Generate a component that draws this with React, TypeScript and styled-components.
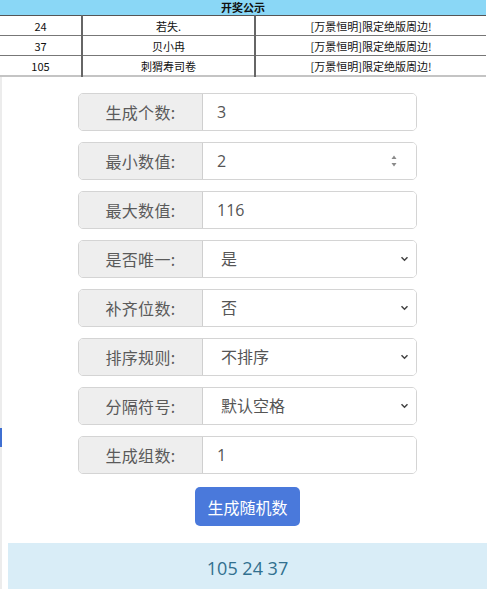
import React from "react";
import styled, { createGlobalStyle } from "styled-components";

const Global = createGlobalStyle`
  html, body { margin: 0; padding: 0; background: #fff; }
  body { font-family: "Noto Sans CJK SC", "Open Sans", sans-serif; }
`;

const Page = styled.div`
  position: relative;
  width: 487px;
  min-height: 589px;
  overflow: hidden;
`;

const Table = styled.table`
  width: 486px;
  border-collapse: collapse;
  table-layout: fixed;
  font-family: "Noto Sans CJK SC", sans-serif;
  font-size: 11px;
  color: #111;
  border-bottom: 2px solid #c4c4c4;
`;

const Col = styled.col<{ $w?: number }>`
  width: ${(p) => (p.$w ? `${p.$w}px` : "auto")};
`;

const HeadCell = styled.th`
  background: #8ad7f6;
  height: 15px;
  padding: 0;
  font-size: 11px;
  font-weight: 700;
  line-height: 15px;
  text-align: center;
  border-bottom: 1px solid #555;
`;

const Cell = styled.td`
  height: 19px;
  padding: 0;
  line-height: 18px;
  text-align: center;
  border-top: 1px solid #777;
  border-left: 2px solid #666;
  &:first-child { border-left: none; }
`;

const Main = styled.div`
  border-left: 2px solid #ececec;
  padding: 16px 0 0 6px;
`;

const Form = styled.div`
  width: 339px;
  margin: 0 auto;
  display: flex;
  flex-direction: column;
  gap: 11px;
`;

const Field = styled.div`
  display: flex;
  height: 38px;
  box-sizing: border-box;
  border: 1px solid #d4d4d4;
  border-radius: 5px;
  overflow: hidden;
`;

const Addon = styled.div`
  width: 123px;
  flex: none;
  background: #eeeeee;
  border-right: 1px solid #cfcfcf;
  display: flex;
  align-items: center;
  justify-content: center;
  font-size: 16px;
  color: #5a5a5a;
  letter-spacing: 0.3px;
`;

const Control = styled.div<{ $pad: number }>`
  flex: 1;
  display: flex;
  align-items: center;
  justify-content: space-between;
  padding: 0 7px 0 ${(p) => p.$pad}px;
  font-family: "Open Sans", "Noto Sans CJK SC", sans-serif;
  font-size: 16px;
  color: #555;
  background: #fff;
`;

const Value = styled.span`
  line-height: 20px;
`;

const Actions = styled.div`
  display: flex;
  justify-content: center;
  margin-top: 13px;
`;

const Button = styled.button`
  width: 105px;
  height: 39px;
  border: none;
  border-radius: 5px;
  background: #4a79db;
  color: #fff;
  font-family: "Noto Sans CJK SC", sans-serif;
  font-size: 16px;
  padding: 0;
`;

const Result = styled.div`
  margin: 17px 0 0 0;
  width: 500px;
  background: #d9edf7;
  color: #31708f;
  font-family: "Open Sans", sans-serif;
  font-size: 18px;
  padding: 13px 21px 20px 0;
  text-align: center;
  box-sizing: border-box;
`;

const Marker = styled.div`
  position: absolute;
  left: 0;
  top: 428px;
  width: 2px;
  height: 19px;
  background: #3f6fd1;
`;

const Chevron = () => (
  <svg width="9" height="6" viewBox="0 0 9 6">
    <path d="M1.5 1.3 L4.5 4.3 L7.5 1.3" fill="none" stroke="#444" strokeWidth="1.5" />
  </svg>
);

const Spinner = () => (
  <svg width="8" height="14" viewBox="0 0 8 14" style={{ marginRight: 11 }}>
    <path d="M4 1.5 L6.5 5 L1.5 5 Z" fill="#8a8a8a" />
    <path d="M4 12.5 L6.5 9 L1.5 9 Z" fill="#8a8a8a" />
  </svg>
);

type Row = { label: string; value: string; kind: "text" | "number" | "select" };

const rows: Row[] = [
  { label: "生成个数:", value: "3", kind: "text" },
  { label: "最小数值:", value: "2", kind: "number" },
  { label: "最大数值:", value: "116", kind: "text" },
  { label: "是否唯一:", value: "是", kind: "select" },
  { label: "补齐位数:", value: "否", kind: "select" },
  { label: "排序规则:", value: "不排序", kind: "select" },
  { label: "分隔符号:", value: "默认空格", kind: "select" },
  { label: "生成组数:", value: "1", kind: "text" },
];

const winners = [
  ["24", "若失.", "[万景恒明]限定绝版周边!"],
  ["37", "贝小冉", "[万景恒明]限定绝版周边!"],
  ["105", "刺猬寿司卷", "[万景恒明]限定绝版周边!"],
];

export default function App() {
  return (
    <Page>
      <Global />
      <Table>
        <colgroup>
          <Col $w={82} />
          <Col $w={173} />
          <Col />
        </colgroup>
        <thead>
          <tr>
            <HeadCell colSpan={3}>开奖公示</HeadCell>
          </tr>
        </thead>
        <tbody>
          {winners.map((w) => (
            <tr key={w[0]}>
              <Cell>{w[0]}</Cell>
              <Cell>{w[1]}</Cell>
              <Cell>{w[2]}</Cell>
            </tr>
          ))}
        </tbody>
      </Table>
      <Main>
        <Form>
          {rows.map((r) => (
            <Field key={r.label}>
              <Addon>{r.label}</Addon>
              <Control $pad={r.kind === "select" ? 18 : 14}>
                <Value>{r.value}</Value>
                {r.kind === "select" && <Chevron />}
                {r.kind === "number" && <Spinner />}
              </Control>
            </Field>
          ))}
        </Form>
        <Actions>
          <Button>生成随机数</Button>
        </Actions>
        <Result>105 24 37</Result>
      </Main>
      <Marker />
    </Page>
  );
}
